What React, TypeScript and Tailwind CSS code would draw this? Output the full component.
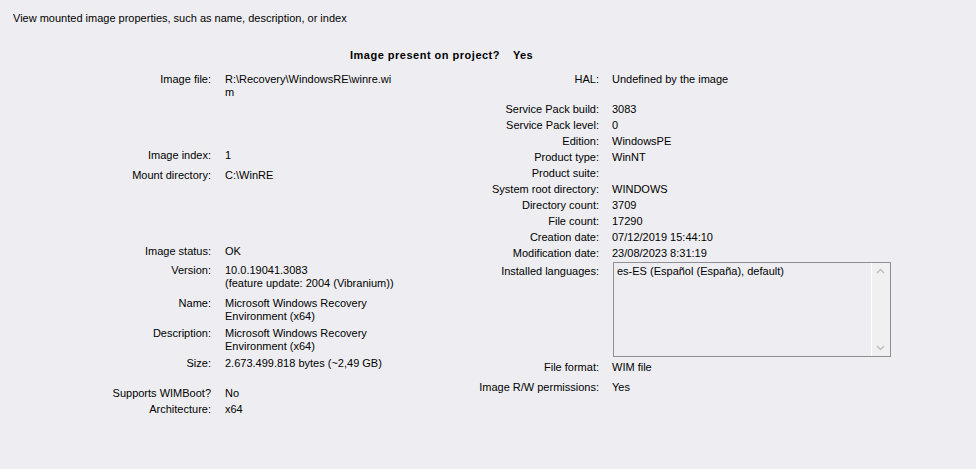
import React from "react";

function LRow({ label, mt, children }: { label: string; mt: string; children?: React.ReactNode }) {
  return (
    <div className={`flex ${mt}`}>
      <div className="w-[211px] shrink-0 text-right">{label}</div>
      <div className="ml-[14px]">{children}</div>
    </div>
  );
}

function RRow({ label, mt, children }: { label: string; mt: string; children?: React.ReactNode }) {
  return (
    <div className={`flex ${mt}`}>
      <div className="w-[199px] shrink-0 text-right">{label}</div>
      <div className="ml-[13px]">{children}</div>
    </div>
  );
}

export default function App() {
  return (
    <div className="w-[976px] h-[469px] bg-[#eeeef2] text-black text-[11px] leading-[13px] font-['Liberation_Sans',Arial,sans-serif] overflow-hidden">
      <div className="pt-[12px] pl-[13px]">View mounted image properties, such as name, description, or index</div>
      <div className="mt-[24px] flex font-bold">
        <div className="w-[500px] text-right tracking-[0.5px]">Image present on project?</div>
        <div className="ml-[13px] tracking-[0.3px]">Yes</div>
      </div>
      <div className="mt-[11px] flex">
        <div className="w-[400px] shrink-0 flex flex-col">
          <LRow label="Image file:" mt="mt-0">
            R:\Recovery\WindowsRE\winre.wi
            <br />m
          </LRow>
          <LRow label="Image index:" mt="mt-[50px]">1</LRow>
          <LRow label="Mount directory:" mt="mt-[7px]">C:\WinRE</LRow>
          <LRow label="Image status:" mt="mt-[63px]">OK</LRow>
          <LRow label="Version:" mt="mt-[6px]">
            10.0.19041.3083
            <br />
            (feature update: 2004 (Vibranium))
          </LRow>
          <LRow label="Name:" mt="mt-[7px]">
            Microsoft Windows Recovery
            <br />
            Environment (x64)
          </LRow>
          <LRow label="Description:" mt="mt-[4px]">
            Microsoft Windows Recovery
            <br />
            Environment (x64)
          </LRow>
          <LRow label="Size:" mt="mt-[4px]">2.673.499.818 bytes (~2,49 GB)</LRow>
          <LRow label="Supports WIMBoot?" mt="mt-[17px]">No</LRow>
          <LRow label="Architecture:" mt="mt-[3px]">x64</LRow>
        </div>
        <div className="flex flex-col">
          <RRow label="HAL:" mt="mt-0">Undefined by the image</RRow>
          <RRow label="Service Pack build:" mt="mt-[17px]">3083</RRow>
          <RRow label="Service Pack level:" mt="mt-[3px]">0</RRow>
          <RRow label="Edition:" mt="mt-[3px]">WindowsPE</RRow>
          <RRow label="Product type:" mt="mt-[3px]">WinNT</RRow>
          <RRow label="Product suite:" mt="mt-[3px]"></RRow>
          <RRow label="System root directory:" mt="mt-[3px]">WINDOWS</RRow>
          <RRow label="Directory count:" mt="mt-[3px]">3709</RRow>
          <RRow label="File count:" mt="mt-[3px]">17290</RRow>
          <RRow label="Creation date:" mt="mt-[3px]">07/12/2019 15:44:10</RRow>
          <RRow label="Modification date:" mt="mt-[3px]">23/08/2023 8:31:19</RRow>
          <div className="flex mt-[2px]">
            <div className="w-[199px] shrink-0 text-right pt-[3px]">Installed languages:</div>
            <div className="ml-[14px] w-[278px] h-[95px] border border-[#8f8f94] bg-[#eeeef2] flex">
              <div className="flex-1 pl-[3px] pt-[2px]">es-ES (Español (España), default)</div>
              <div className="w-[18px] mr-[1px] border-l border-white bg-[#f0f0f0] flex flex-col justify-between items-center py-[5px]">
                <svg width="9" height="6" viewBox="0 0 9 6">
                  <path d="M1 5 L4.5 1.5 L8 5" fill="none" stroke="#bdbdbd" strokeWidth="1.4" />
                </svg>
                <svg width="9" height="6" viewBox="0 0 9 6">
                  <path d="M1 1 L4.5 4.5 L8 1" fill="none" stroke="#bdbdbd" strokeWidth="1.4" />
                </svg>
              </div>
            </div>
          </div>
          <RRow label="File format:" mt="mt-[4px]">WIM file</RRow>
          <RRow label="Image R/W permissions:" mt="mt-[7px]">Yes</RRow>
        </div>
      </div>
    </div>
  );
}
